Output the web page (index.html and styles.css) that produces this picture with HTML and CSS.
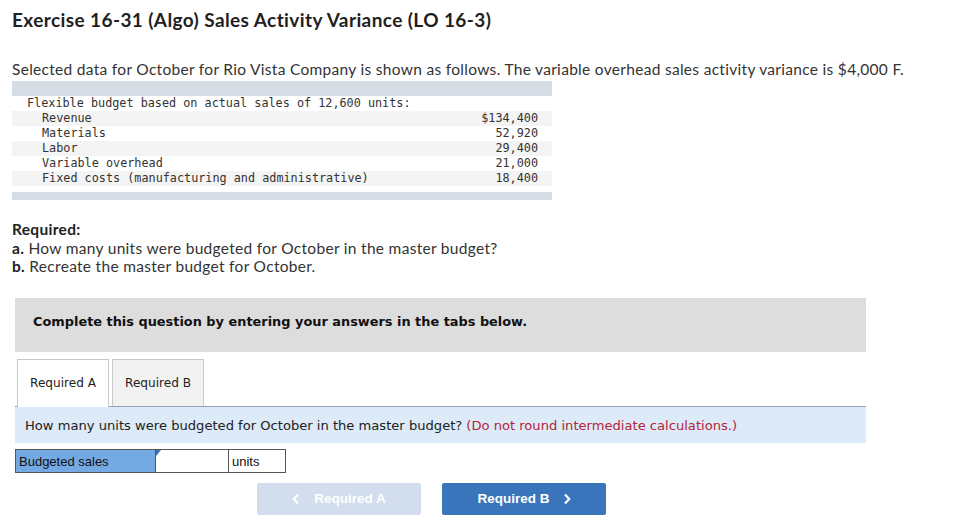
FILE: index.html
```html
<!DOCTYPE html>
<html>
<head>
<meta charset="utf-8">
<link rel="stylesheet" href="styles.css">
</head>
<body>
<div class="page">
  <h1 class="title">Exercise 16-31 (Algo) Sales Activity Variance (LO 16-3)</h1>
  <p class="intro">Selected data for October for Rio Vista Company is shown as follows. The variable overhead sales activity variance is $4,000 F.</p>

  <div class="data">
    <div class="bar-top"></div>
    <div class="row head"><span class="lbl">Flexible budget based on actual sales of 12,600 units:</span></div>
    <div class="row alt"><span class="lbl item">Revenue</span><span class="num">$134,400</span></div>
    <div class="row"><span class="lbl item">Materials</span><span class="num">52,920</span></div>
    <div class="row alt"><span class="lbl item">Labor</span><span class="num">29,400</span></div>
    <div class="row"><span class="lbl item">Variable overhead</span><span class="num">21,000</span></div>
    <div class="row alt"><span class="lbl item">Fixed costs (manufacturing and administrative)</span><span class="num">18,400</span></div>
    <div class="bar-bottom"></div>
  </div>

  <div class="required">
    <div class="req-head">Required:</div>
    <div><b>a.</b> How many units were budgeted for October in the master budget?</div>
    <div><b>b.</b> Recreate the master budget for October.</div>
  </div>

  <div class="banner">Complete this question by entering your answers in the tabs below.</div>

  <div class="tabs">
    <div class="tab active">Required A</div>
    <div class="tab">Required B</div>
  </div>
  <div class="panel">How many units were budgeted for October in the master budget? <span class="note">(Do not round intermediate calculations.)</span></div>

  <div class="answer">
    <div class="a-label">Budgeted sales</div>
    <div class="a-input"><span class="tri"></span></div>
    <div class="a-unit">units</div>
  </div>

  <div class="nav">
    <div class="btn prev"><svg class="chev left" width="8" height="12" viewBox="0 0 8 12"><path d="M6 1.5 L1.8 6 L6 10.5" fill="none" stroke="#fff" stroke-width="2.2"/></svg>Required A</div>
    <div class="btn next">Required B<svg class="chev right" width="8" height="12" viewBox="0 0 8 12"><path d="M2 1.5 L6.2 6 L2 10.5" fill="none" stroke="#fff" stroke-width="2.2"/></svg></div>
  </div>
</div>
</body>
</html>
```
FILE: styles.css
```css
* { box-sizing: border-box; }
html, body { margin: 0; padding: 0; background: #fff; }
body { font-family: "Lato", "Open Sans", sans-serif; color: #333; }
.page { padding: 8px 0 0 12px; width: 973px; }

.title {
  margin: 0;
  font-family: "Lato", sans-serif;
  font-weight: 700;
  font-size: 19px;
  letter-spacing: 0.4px;
  line-height: 24px;
  color: #1f1f1f;
}
.intro {
  margin: 27px 0 0 0;
  font-size: 15.5px;
  letter-spacing: 0.3px;
  line-height: 20px;
  color: #333;
}

.data {
  width: 540px;
  margin-top: 2px;
  font-family: "DejaVu Sans Mono", monospace;
  font-size: 11.8px;
  color: #333;
}
.bar-top { height: 15px; background: #d7dde5; }
.bar-bottom { height: 8px; background: #d7dde5; margin-top: 6px; }
.row { display: flex; justify-content: space-between; height: 15px; line-height: 15px; padding: 0 14px 0 15px; }
.row.alt { background: #f4f4f4; }
.row .item { padding-left: 15px; }
.num { text-align: right; }

.required {
  margin-top: 20px;
  font-size: 15.5px;
  letter-spacing: 0.3px;
  line-height: 18.5px;
  color: #333;
}
.req-head { font-weight: 700; color: #222; }
.required b { font-weight: 700; color: #222; }

.banner {
  margin: 22px 0 0 3px;
  width: 851px;
  height: 54px;
  background: #dddddd;
  padding: 0 0 7px 18px;
  display: flex;
  align-items: center;
  font-family: "DejaVu Sans", Verdana, sans-serif;
  font-weight: 700;
  font-size: 12.9px;
  color: #111;
}

.tabs { display: flex; gap: 3px; margin: 7px 0 0 5px; height: 47px; }
.tab {
  width: 92px;
  height: 47px;
  border: 1px solid #c8c8c8;
  border-bottom: none;
  background: #f2f2f2;
  display: flex; align-items: center; justify-content: center;
  font-family: "DejaVu Sans", Verdana, sans-serif;
  font-size: 12.1px;
  color: #222;
}
.tab.active { background: #fff; height: 48px; position: relative; z-index: 1; }

.panel {
  margin-left: 3px;
  width: 851px;
  height: 37px;
  background: #dcebf7;
  border-top: 1px solid #8ea4b6;
  padding: 2px 0 0 10px;
  display: flex; align-items: center;
  font-family: "DejaVu Sans", Verdana, sans-serif;
  font-size: 13.1px;
  color: #222;
}
.note { color: #b5233c; margin-left: 4px; }

.answer {
  display: flex;
  margin: 6px 0 0 3px;
  height: 24px;
  font-family: "Liberation Sans", Arial, sans-serif;
  font-size: 13px;
}
.a-label {
  width: 140px;
  background: #74a9e4;
  border: 1px solid #555;
  border-right: none;
  color: #111;
  padding: 4px 0 0 3px;
}
.a-input {
  width: 74px;
  border: 1px solid #555;
  background: #fff;
  position: relative;
}
.tri {
  position: absolute; left: 0; top: 0;
  width: 0; height: 0;
  border-top: 6px solid #3d6fb3;
  border-right: 5px solid transparent;
}
.a-unit {
  width: 57px;
  border: 1px solid #555;
  border-left: none;
  background: #fff;
  padding: 4px 0 0 3px;
  color: #111;
}

.nav { display: flex; gap: 21px; margin: 10px 0 0 245px; }
.btn {
  width: 164px; height: 32px;
  display: flex; align-items: center; justify-content: center;
  font-family: "Liberation Sans", Arial, sans-serif;
  font-weight: 700;
  font-size: 13.5px;
  color: #fff;
  border-radius: 2px;
}
.btn.prev { background: #d2deed; }
.btn.next { background: #3a74ba; }
.chev.left { margin-right: 14px; }
.chev.right { margin-left: 13px; }
```
